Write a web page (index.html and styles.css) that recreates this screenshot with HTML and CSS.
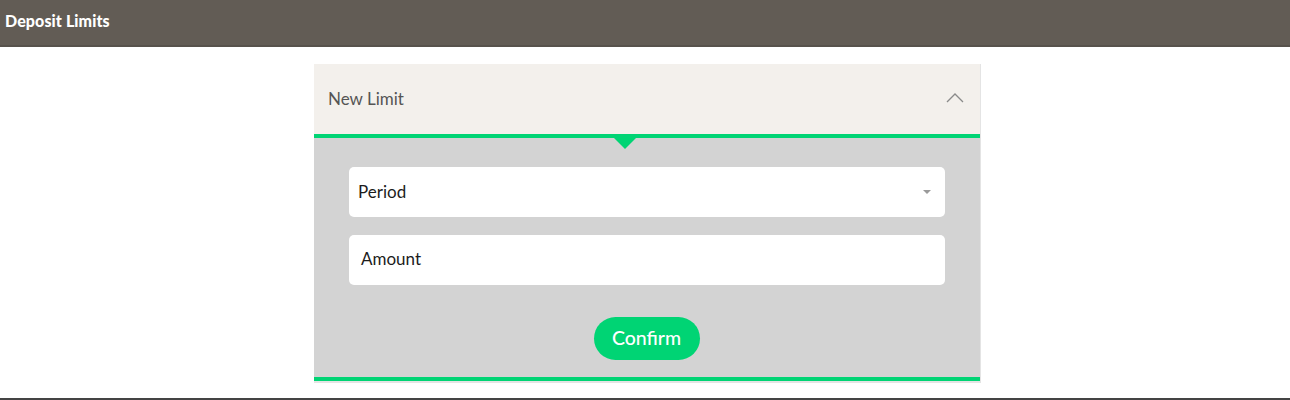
FILE: index.html
```html
<!DOCTYPE html>
<html>
<head>
<meta charset="utf-8">
<link rel="stylesheet" href="styles.css">
</head>
<body>
<div class="page">
  <header class="topbar"><h1 class="title">Deposit Limits</h1></header>
  <main class="content">
    <section class="panel">
      <div class="panel-head">
        <span class="panel-title">New Limit</span>
        <svg class="chev" width="18" height="11" viewBox="0 0 18 11"><path d="M1 10 L9 2 L17 10" fill="none" stroke="#8a8a8a" stroke-width="1.3"/></svg>
      </div>
      <div class="panel-body">
        <span class="pointer"></span>
        <div class="field select"><span>Period</span><span class="caret"></span></div>
        <div class="field amount"><span>Amount</span></div>
        <div class="actions"><button class="confirm">Confirm</button></div>
      </div>
    </section>
  </main>
  <div class="footline"></div>
</div>
</body>
</html>
```
FILE: styles.css
```css
* { box-sizing: border-box; }
html, body { margin: 0; padding: 0; }
body { font-family: Lato, "Open Sans", sans-serif; background: #fff; width: 1290px; height: 400px; overflow: hidden; }
.page { display: flex; flex-direction: column; height: 400px; }
.topbar { height: 47px; background: #625c55; border-bottom: 2px solid #57524c; display: flex; align-items: center; padding-left: 5px; }
.title { margin: 0; font-size: 16px; font-weight: 900; color: #fff; letter-spacing: 0.1px; padding-bottom: 4px; }
.content { flex: 1; display: flex; justify-content: center; padding-top: 17px; padding-left: 5px; }
.panel { width: 667px; height: 319px; border-right: 1px solid #e4e4e4; border-bottom: 2px solid #e4e4e4; display: flex; flex-direction: column; }
.panel-head { height: 74px; background: #f3f0ec; border-bottom: 4px solid #00d474; display: flex; align-items: center; justify-content: space-between; padding: 0 16px 2px 14px; }
.panel-title { font-size: 17px; color: #555555; }
.chev { margin-top: -2px; }
.panel-body { position: relative; flex: 1; background: #d3d3d3; border-bottom: 4px solid #00d474; padding: 29px 35px 0; display: flex; flex-direction: column; gap: 18px; }
.pointer { position: absolute; left: 300px; top: 0; width: 0; height: 0; border-left: 11px solid transparent; border-right: 11px solid transparent; border-top: 11px solid #00d474; }
.field { height: 50px; background: #fff; border-radius: 5px; display: flex; align-items: center; justify-content: space-between; font-size: 17px; color: #1c1c1c; }
.select { padding: 0 14px 2px 9px; }
.amount { padding: 0 12px 4px; }
.caret { width: 0; height: 0; border-left: 4px solid transparent; border-right: 4px solid transparent; border-top: 4px solid #9a9a9a; margin-top: 2px; }
.actions { display: flex; justify-content: center; margin-top: 14px; padding-right: 1px; }
.confirm { width: 106px; height: 43px; border: none; border-radius: 22px; background: #00d474; color: #fff; font-family: Lato, "Open Sans", sans-serif; font-size: 19.5px; font-weight: 500; padding: 0 0 2px; }
.footline { height: 2px; background: #444; margin-top: auto; }
```
